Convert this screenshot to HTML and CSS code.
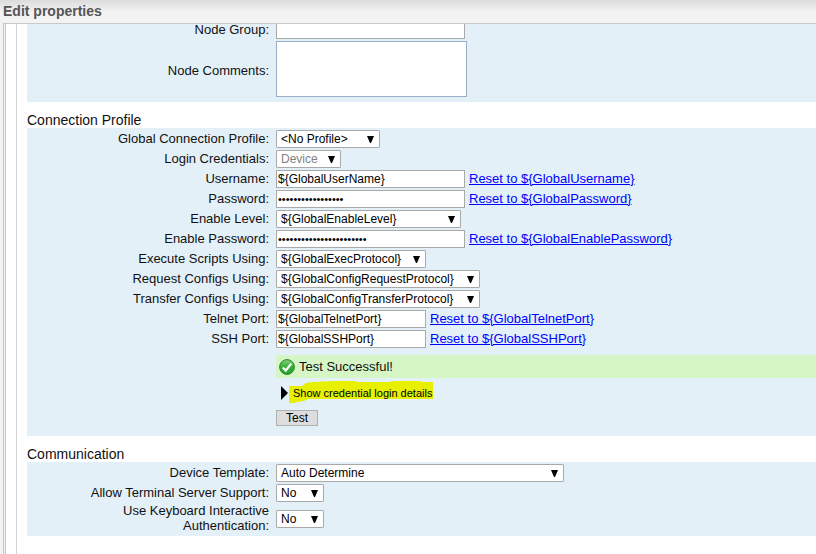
FILE: index.html
```html
<!DOCTYPE html>
<html lang="en">
<head>
  <meta charset="UTF-8" />
  <meta name="viewport" content="width=device-width, initial-scale=1.0"/>
  <title>Edit properties</title>
  <link rel="stylesheet" href="styles.css">
</head>
<body>

<header class="header">
  <h1>Edit properties</h1>
</header>

<main class="frame">
  <form class="content">
    <!-- Node details -->
    <section class="panel node-panel">
      <div class="row">
        <label for="nodeGroup">Node Group:</label>
        <div class="field"><input type="text" id="nodeGroup" class="wide"></div>
      </div>
      <div class="row comments-row">
        <label for="nodeComments">Node Comments:</label>
        <div class="field"><textarea id="nodeComments"></textarea></div>
      </div>
    </section>

    <!-- Connection profile -->
    <h2>Connection Profile</h2>
    <section class="panel">
      <div class="row">
        <label for="profile">Global Connection Profile:</label>
        <div class="field"><select id="profile" class="select-profile"><option>&lt;No Profile&gt;</option></select></div>
      </div>
      <div class="row">
        <label for="credentials">Login Credentials:</label>
        <div class="field"><select id="credentials" class="select-device" disabled><option>Device</option></select></div>
      </div>
      <div class="row">
        <label for="username">Username:</label>
        <div class="field">
          <input type="text" id="username" class="wide" value="${GlobalUserName}">
          <a href="#">Reset to ${GlobalUsername}</a>
        </div>
      </div>
      <div class="row">
        <label for="password">Password:</label>
        <div class="field">
          <input type="password" id="password" class="wide" value="${GlobalPassword}">
          <a href="#">Reset to ${GlobalPassword}</a>
        </div>
      </div>
      <div class="row">
        <label for="enableLevel">Enable Level:</label>
        <div class="field"><select id="enableLevel" class="select-level"><option>${GlobalEnableLevel}</option></select></div>
      </div>
      <div class="row">
        <label for="enablePassword">Enable Password:</label>
        <div class="field">
          <input type="password" id="enablePassword" class="wide" value="${GlobalEnablePassword}">
          <a href="#">Reset to ${GlobalEnablePassword}</a>
        </div>
      </div>
      <div class="row">
        <label for="execProtocol">Execute Scripts Using:</label>
        <div class="field"><select id="execProtocol" class="select-exec"><option>${GlobalExecProtocol}</option></select></div>
      </div>
      <div class="row">
        <label for="requestProtocol">Request Configs Using:</label>
        <div class="field"><select id="requestProtocol" class="select-config"><option>${GlobalConfigRequestProtocol}</option></select></div>
      </div>
      <div class="row">
        <label for="transferProtocol">Transfer Configs Using:</label>
        <div class="field"><select id="transferProtocol" class="select-config"><option>${GlobalConfigTransferProtocol}</option></select></div>
      </div>
      <div class="row">
        <label for="telnetPort">Telnet Port:</label>
        <div class="field">
          <input type="text" id="telnetPort" class="port" value="${GlobalTelnetPort}">
          <a href="#">Reset to ${GlobalTelnetPort}</a>
        </div>
      </div>
      <div class="row">
        <label for="sshPort">SSH Port:</label>
        <div class="field">
          <input type="text" id="sshPort" class="port" value="${GlobalSSHPort}">
          <a href="#">Reset to ${GlobalSSHPort}</a>
        </div>
      </div>

      <div class="test-area">
        <div class="success">
          <svg width="16" height="16" viewBox="0 0 16 16" aria-hidden="true">
            <defs>
              <linearGradient id="ball" x1="0" y1="0" x2="0" y2="1">
                <stop offset="0" stop-color="#7fd27a"/>
                <stop offset="0.5" stop-color="#35b034"/>
                <stop offset="1" stop-color="#2aa32c"/>
              </linearGradient>
            </defs>
            <circle cx="8" cy="8" r="7.4" fill="url(#ball)" stroke="#28852b" stroke-width="1"/>
            <path d="M3.8 8.4 L6.8 11.5 L12.2 4.6" fill="none" stroke="#fff" stroke-width="2.2"/>
          </svg>
          <span>Test Successful!</span>
        </div>
        <button type="button" class="details">
          <svg class="arrow" width="7" height="14" viewBox="0 0 7 14" aria-hidden="true"><path d="M0 0 L7 7 L0 14 Z"/></svg>
          <span class="details-text">
            <svg class="marker" width="144" height="22" viewBox="0 0 144 22" aria-hidden="true">
              <path d="M0 5 H13 L17 2 L24 1 L45 0 H67 V1 H102 V0 H132 V1 H144 V18 H19 L15 20 L8 21 L6 22 H0 Z" fill="#e6f000"/>
            </svg>
            <span class="details-label">Show credential login details</span>
          </span>
        </button>
        <button type="button" class="test-btn">Test</button>
      </div>
    </section>

    <!-- Communication -->
    <h2>Communication</h2>
    <section class="panel">
      <div class="row">
        <label for="template">Device Template:</label>
        <div class="field"><select id="template" class="select-template"><option>Auto Determine</option></select></div>
      </div>
      <div class="row">
        <label for="terminal">Allow Terminal Server Support:</label>
        <div class="field"><select id="terminal" class="select-no"><option>No</option></select></div>
      </div>
      <div class="row tall-row">
        <label for="keyboard">Use Keyboard Interactive Authentication:</label>
        <div class="field"><select id="keyboard" class="select-no"><option>No</option></select></div>
      </div>
    </section>
  </form>
</main>

</body>
</html>
```
FILE: styles.css
```css
* {
  box-sizing: border-box;
}

body {
  margin: 0;
  height: 100vh;
  display: flex;
  flex-direction: column;
  overflow: hidden;
  background: #f3f3f3;
  color: #111;
  font-family: "Liberation Sans", Arial, sans-serif;
  font-size: 13px;
  line-height: 15px;
}

.header {
  height: 23px;
  flex: none;
  padding: 3px;
  background: linear-gradient(#dcdcdc, #f3f3f3 12px);
}

h1 {
  margin: 0;
  font-size: 14px;
  line-height: 16px;
  color: #555;
}

.frame {
  flex: 1;
  min-height: 0;
  margin-left: 3px;
  padding-left: 1px;
  border-top: 1px solid #c8c8c8;
  border-left: 1px solid #c8c8c8;
  overflow: hidden;
}

.content {
  display: flow-root;
  min-height: 100%;
  padding-left: 21px;
  border-left: 1px solid #c8c8c8;
  background: linear-gradient(#d4d4d4, #d4d4d4) 10px 0 / 1px 100% no-repeat #fff;
}

h2 {
  margin: 0;
  padding-top: 10px;
  font-size: 14px;
  font-weight: normal;
  line-height: 16px;
}

.panel {
  padding: 1px 0;
  background: #e3f0f8;
}

/* the first panel is scrolled partly under the header */
.node-panel {
  margin-top: -5px;
  padding-bottom: 4px;
}

.row {
  display: grid;
  grid-template-columns: 242px 1fr;
  column-gap: 7px;
  align-items: center;
  min-height: 20px;
}

.comments-row {
  min-height: 58px;
}

.tall-row {
  min-height: 32px;
}

label {
  justify-self: end;
  max-width: 200px;
  padding-bottom: 2px;
  text-align: right;
}

.comments-row label {
  padding: 2px 0 0;
}

.field {
  display: flex;
  align-items: center;
  gap: 4px;
}

input,
select,
textarea {
  height: 18px;
  margin: 0;
  padding: 0 1px;
  border: 1px solid #a9a9a9;
  border-radius: 0;
  background: #fff;
  color: #000;
  font-family: inherit;
  font-size: 12px;
}

input[type="password"] {
  font-size: 11px;
}

select {
  appearance: none;
  padding: 0 20px 0 4px;
  border-radius: 1px;
  background: #fff url("data:image/svg+xml,%3Csvg xmlns='http://www.w3.org/2000/svg' width='7' height='7'%3E%3Cpath d='M0 0H7L4 7H3Z'/%3E%3C/svg%3E") no-repeat right 5px center;
}

select:disabled {
  color: #808080;
  opacity: 1;
}

textarea {
  display: block;
  width: 191px;
  height: 56px;
  border-color: #9badc8;
  resize: none;
}

.wide {
  width: 189px;
}

.port {
  width: 150px;
}

.select-profile {
  width: 104px;
}

.select-device {
  width: 65px;
}

.select-level {
  width: 185px;
}

.select-exec {
  width: 150px;
}

.select-config {
  width: 204px;
}

.select-template {
  width: 288px;
}

.select-no {
  width: 48px;
}

a {
  padding-bottom: 2px;
  color: #00f;
}

.test-area {
  display: flex;
  flex-direction: column;
  align-items: flex-start;
  margin-left: 249px;
  padding: 6px 0 9px;
}

.success {
  display: flex;
  align-items: center;
  align-self: stretch;
  gap: 4px;
  height: 23px;
  padding-left: 3px;
  background: #d6f6c6;
}

button {
  padding: 0;
  border: none;
  background: none;
  color: #000;
  font-family: inherit;
  cursor: pointer;
}

.details {
  display: flex;
  align-items: center;
  gap: 5px;
  height: 30px;
  padding-left: 5px;
  font-size: 11px;
}

.details-text {
  position: relative;
}

/* highlighter stroke behind the label */
.marker {
  position: absolute;
  top: -6px;
  left: -4px;
}

.details-label {
  position: relative;
}

.test-btn {
  width: 42px;
  height: 16px;
  margin-top: 2px;
  border: 1px solid #b0b0b0;
  background: #ddd;
  font-size: 12px;
  line-height: 14px;
}
```
